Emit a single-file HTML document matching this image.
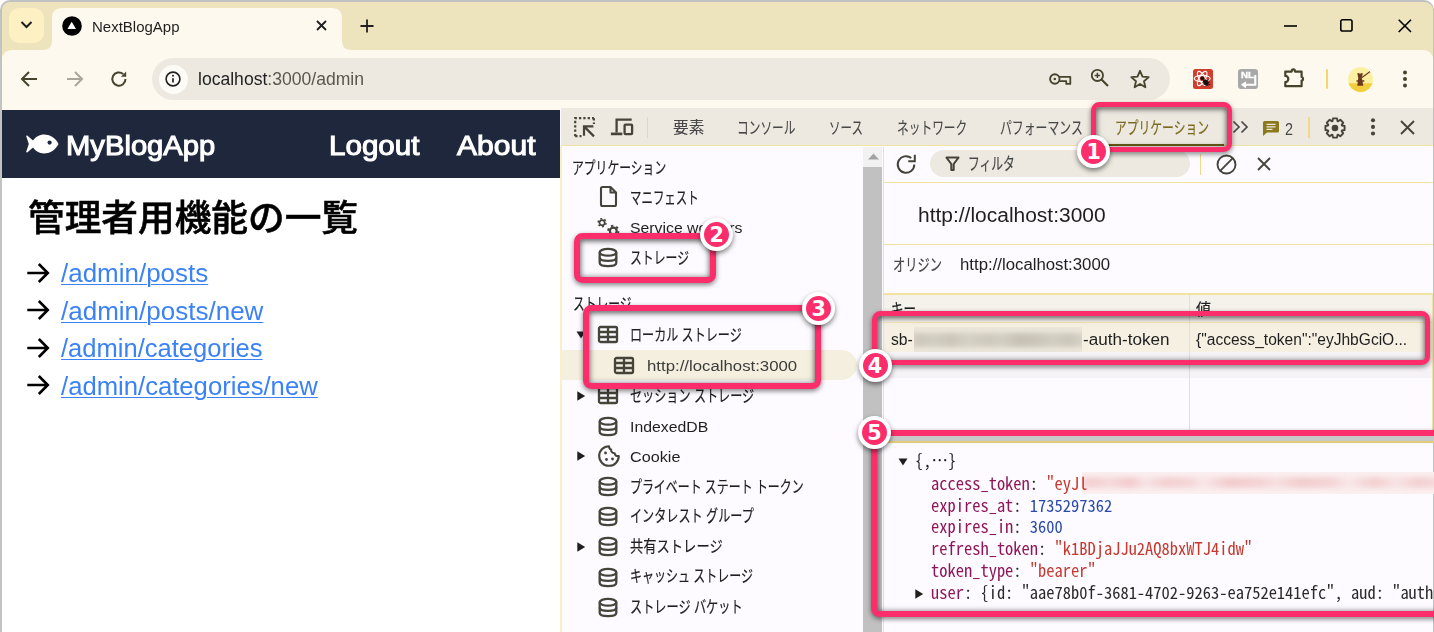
<!DOCTYPE html>
<html lang="ja"><head><meta charset="utf-8"><title>NextBlogApp</title>
<style>
html,body{margin:0;padding:0;}
body{width:1434px;height:632px;overflow:hidden;position:relative;background:#fff;font-family:"Liberation Sans", "Noto Sans CJK JP", sans-serif;}
.b{position:absolute;box-sizing:border-box;}
.t{position:absolute;white-space:pre;line-height:1;transform-origin:0 0;margin:0;padding:0;}
.t i{display:inline-block;width:0;height:0;}
svg{position:absolute;overflow:visible;}
.pk{position:absolute;box-sizing:border-box;border:5.8px solid #fc2d6b;border-radius:8.5px;box-shadow:inset 0 0 6px rgba(0,0,0,.3);filter:drop-shadow(0.5px 2.6px 2.7px rgba(0,0,0,.5));}
.bd{position:absolute;box-sizing:border-box;width:33px;height:33px;border-radius:50%;background:#fc2d6b;border:4px solid #fff;box-shadow:0 2.5px 5px rgba(0,0,0,.5);color:#fff;font:bold 20.7px/26px 'DejaVu Sans', "Liberation Sans", "Noto Sans CJK JP", sans-serif;text-align:center;}
</style></head><body>
<div class="b" style="left:0px;top:0px;width:1434px;height:700px;background:#ede3bc;border:2px solid #c2c2c2;border-right-width:1.5px;border-radius:10px 10px 0 0;"></div>
<div class="b" style="left:9px;top:8px;width:35px;height:35px;background:#fdf0c3;border-radius:10px;"></div>
<svg style="left:20px;top:20px;" width="13" height="10" viewBox="0 0 13 10"><path d="M1.5 2 L6.5 7 L11.5 2" fill="none" stroke="#1f1f1f" stroke-width="2"/></svg>
<div class="b" style="left:2px;top:50px;width:1430.5px;height:59.5px;background:#fdf9ee;border-radius:9px 9px 0 0;"></div>
<svg style="left:40px;top:8px;" width="320" height="42" viewBox="0 0 320 42"><path d="M2 42 C10 42 12 38 12 32 L12 10 Q12 0 22 0 L292 0 Q302 0 302 10 L302 32 C302 38 304 42 312 42 Z" fill="#fdf9ee"/></svg>
<svg style="left:62px;top:15.5px;" width="20" height="20" viewBox="0 0 20 20"><circle cx="10" cy="10" r="9.8" fill="#000"/><path d="M9.7 5.800 L14 13.100 L5.400 13.100 Z" fill="#fff"/></svg>
<svg style="left:316px;top:20px;" width="11" height="11" viewBox="0 0 11 11"><path d="M1 1 L10 10 M10 1 L1 10" stroke="#1f1f1f" stroke-width="1.8" fill="none"/></svg>
<svg style="left:359.5px;top:18.5px;" width="14" height="14" viewBox="0 0 14 14"><path d="M7 0.5 V13.5 M0.5 7 H13.5" stroke="#1f1f1f" stroke-width="1.8" fill="none"/></svg>
<svg style="left:1283.5px;top:24.8px;" width="14" height="2" viewBox="0 0 14 2"><path d="M0 1 H13" stroke="#000" stroke-width="1.6"/></svg>
<svg style="left:1340px;top:19px;" width="13" height="13" viewBox="0 0 13 13"><rect x="0.8" y="0.8" width="11.2" height="11.2" rx="1.8" fill="none" stroke="#000" stroke-width="1.6"/></svg>
<svg style="left:1398px;top:19px;" width="14" height="14" viewBox="0 0 14 14"><path d="M0.7 0.7 L13 13 M13 0.7 L0.7 13" stroke="#000" stroke-width="1.6" fill="none"/></svg>
<svg style="left:20px;top:70px;" width="18" height="18" viewBox="0 0 18 18"><path d="M17 9 H2.5 M9 2 L2 9 L9 16" fill="none" stroke="#47432d" stroke-width="2"/></svg>
<svg style="left:66px;top:70px;" width="18" height="18" viewBox="0 0 18 18"><path d="M1 9 H15.5 M9 2 L16 9 L9 16" fill="none" stroke="#aaa69a" stroke-width="2"/></svg>
<svg style="left:110px;top:70px;" width="18" height="18" viewBox="0 0 18 18"><path d="M15.5 9 A6.6 6.6 0 1 1 13.2 4" fill="none" stroke="#47432d" stroke-width="2"/><path d="M16.2 1.5 V6.8 H10.9 Z" fill="#47432d"/></svg>
<div class="b" style="left:152px;top:58px;width:1018px;height:42px;background:#ede9e1;border-radius:21px;"></div>
<div class="b" style="left:158.5px;top:64.5px;width:29px;height:29px;background:#fdfbf6;border-radius:50%;"></div>
<svg style="left:165px;top:71px;" width="16" height="16" viewBox="0 0 16 16"><circle cx="8" cy="8" r="6.9" fill="none" stroke="#1f1f1f" stroke-width="1.6"/><path d="M8 7.2 V11.6" stroke="#1f1f1f" stroke-width="1.7"/><circle cx="8" cy="4.7" r="1" fill="#1f1f1f"/></svg>
<svg style="left:1049px;top:73px;" width="24" height="13" viewBox="0 0 24 13"><circle cx="5.8" cy="6" r="4.700" fill="none" stroke="#47432d" stroke-width="1.900"/><circle cx="5.800" cy="6" r="1.300" fill="#47432d"/><path d="M10.2 3.900 H21.300 V10.900 H17.300 V8.200 H10.200" fill="none" stroke="#47432d" stroke-width="1.800" stroke-linejoin="round"/></svg>
<svg style="left:1090px;top:68px;" width="20" height="20" viewBox="0 0 20 20"><circle cx="7.4" cy="7.4" r="5.6" fill="none" stroke="#47432d" stroke-width="1.8"/><path d="M11.5 11.5 L18 18" stroke="#47432d" stroke-width="2.1"/><path d="M7.4 4.700 V10.1 M4.700 7.4 H10.1" stroke="#47432d" stroke-width="1.500"/></svg>
<svg style="left:1130px;top:69px;" width="20" height="20" viewBox="0 0 20 20"><path d="M10 1.8 L12.5 7.6 L18.7 8.1 L14 12.2 L15.4 18.3 L10 15 L4.6 18.3 L6 12.2 L1.3 8.1 L7.5 7.6 Z" fill="none" stroke="#47432d" stroke-width="1.8" stroke-linejoin="round"/></svg>
<div class="b" style="left:1192.8px;top:68.6px;width:20.4px;height:20.4px;background:#d03f2e;border-radius:2.5px;"></div>
<svg style="left:1192.8px;top:68.6px;" width="20.4" height="20.4" viewBox="0 0 20.4 20.4"><g fill="none" stroke="#fff" stroke-width="1.100"><ellipse cx="9.200" cy="9.500" rx="8" ry="3.100"/><ellipse cx="9.200" cy="9.500" rx="8" ry="3.100" transform="rotate(60 9.200 9.500)"/><ellipse cx="9.200" cy="9.500" rx="8" ry="3.100" transform="rotate(120 9.200 9.500)"/></g><circle cx="9.300" cy="9.300" r="1.900" fill="#1a0f0c"/><ellipse cx="12.800" cy="13.300" rx="2.300" ry="3.300" transform="rotate(-40 12.800 13.300)" fill="#1a0f0c"/><path d="M9.500 13.500 L15.800 10.800 M10.500 15.800 L16.800 12.800 M11.800 17.300 L17.300 15.300" stroke="#1a0f0c" stroke-width="0.900"/></svg>
<div class="b" style="left:1237.9px;top:68.6px;width:20.3px;height:20.4px;background:#a8a8a8;border-radius:3px;"></div>
<svg style="left:1237.9px;top:68.6px;" width="20.3" height="20.4" viewBox="0 0 20.3 20.4"><path d="M17.300 6 V15.800 H6.500" fill="none" stroke="#fff" stroke-width="2.100"/><path d="M2.800 15.800 L8 12.300 V19.300 Z" fill="#fff"/></svg>
<svg style="left:1282px;top:66px;" width="24" height="24" viewBox="0 0 24 24"><path d="M3.300 5.600 H9.700 A1.650 2.300 0 0 1 13 5.600 H19.600 V11 A1.400 1.800 0 0 1 19.600 14.600 V20.200 H3.300 V16.100 A3 3.100 0 0 0 3.300 9.900 Z" fill="none" stroke="#47432d" stroke-width="2.200" stroke-linejoin="round"/></svg>
<div class="b" style="left:1325.8px;top:69px;width:2px;height:19.6px;background:#f4d66a;border-radius:1px;"></div>
<svg style="left:1348px;top:66.8px;border-radius:50%;overflow:hidden;" width="25.2" height="25.2" viewBox="0 0 25.2 25.2"><g><rect width="26" height="26" fill="#fbf0a2"/><rect y="16.300" width="26" height="10" fill="#f2ce3f"/><path d="M9.300 18.800 L10.300 10.500 Q12 6.500 13.800 10.500 L15.300 18.800 Z" fill="#6b3a1e"/><circle cx="12" cy="8.700" r="2.300" fill="#6b3a1e"/><circle cx="10.300" cy="7" r="1" fill="#6b3a1e"/><circle cx="13.800" cy="7" r="1" fill="#6b3a1e"/><path d="M14 10.500 L22.500 4.300" stroke="#6b3a1e" stroke-width="1.100" fill="none"/><path d="M8.500 14 L16.300 14" stroke="#6b3a1e" stroke-width="1.300"/></g></svg>
<svg style="left:1402px;top:70px;" width="6" height="20" viewBox="0 0 6 20"><circle cx="3" cy="2.400" r="2" fill="#47432d"/><circle cx="3" cy="8.900" r="2" fill="#47432d"/><circle cx="3" cy="15.400" r="2" fill="#47432d"/></svg>
<div class="b" style="left:2px;top:109.5px;width:558.4px;height:530px;background:#fff;"></div>
<div class="b" style="left:2px;top:109.5px;width:559.2px;height:68.2px;background:#1e273b;"></div>
<svg style="left:26px;top:134px;" width="33" height="20" viewBox="0 0 33 20"><path d="M32.6 10 C29 3.2 23.5 0.6 18 0.6 C13.5 0.6 9.5 3 7 6.5 L1.2 1.6 C0.6 1.2 0 1.7 0.3 2.4 L2.8 10 L0.3 17.6 C0 18.3 0.6 18.8 1.2 18.4 L7 13.5 C9.5 17 13.500 19.4 18 19.4 C23.5 19.4 29 16.800 32.6 10 Z" fill="#fff"/><circle cx="23.6" cy="8.6" r="2.1" fill="#1e273b"/></svg>
<svg style="left:26.5px;top:262.7px;" width="23" height="20" viewBox="0 0 23 20"><path d="M0.3 10 H20.8 M11.8 1 L20.8 10 L11.8 19" fill="none" stroke="#000" stroke-width="2.6"/></svg>
<svg style="left:26.5px;top:300.2px;" width="23" height="20" viewBox="0 0 23 20"><path d="M0.3 10 H20.8 M11.8 1 L20.8 10 L11.8 19" fill="none" stroke="#000" stroke-width="2.6"/></svg>
<svg style="left:26.5px;top:337.7px;" width="23" height="20" viewBox="0 0 23 20"><path d="M0.3 10 H20.8 M11.8 1 L20.8 10 L11.8 19" fill="none" stroke="#000" stroke-width="2.6"/></svg>
<svg style="left:26.5px;top:375.2px;" width="23" height="20" viewBox="0 0 23 20"><path d="M0.3 10 H20.8 M11.8 1 L20.8 10 L11.8 19" fill="none" stroke="#000" stroke-width="2.6"/></svg>
<div class="b" style="left:560.3px;top:108.4px;width:873px;height:530px;background:#fdfbff;"></div>
<div class="b" style="left:560.3px;top:146px;width:1.7px;height:530px;background:#fbefc8;"></div>
<div class="b" style="left:561.2px;top:108.4px;width:872px;height:36.6px;background:#ede9e1;"></div>
<div class="b" style="left:561.2px;top:144.8px;width:872px;height:1.4px;background:#f3e3a3;"></div>
<svg style="left:572.6px;top:116.2px;" width="23" height="22" viewBox="0 0 23 22"><path d="M2.200 20.200 V2.200 H20.900" fill="none" stroke="#46443a" stroke-width="2.200" stroke-dasharray="2.300 2.050"/><path d="M20.900 2.200 V8" fill="none" stroke="#46443a" stroke-width="2.200" stroke-dasharray="2.300 2.050"/><path d="M2.200 20.200 H8.500" fill="none" stroke="#46443a" stroke-width="2.200" stroke-dasharray="2.300 2.050"/><path d="M21 20.400 L11 10.400 M11 19.800 V10.400 H20.400" fill="none" stroke="#46443a" stroke-width="2.200"/></svg>
<svg style="left:610px;top:117px;" width="25" height="20" viewBox="0 0 25 20"><path d="M6.600 15.500 V2.600 H21.700" fill="none" stroke="#46443a" stroke-width="2.300"/><path d="M0.900 16.900 H12.300" stroke="#46443a" stroke-width="2.700"/><rect x="14.600" y="7.600" width="7.500" height="9.500" rx="0.800" fill="none" stroke="#46443a" stroke-width="2.300"/></svg>
<div class="b" style="left:646.5px;top:117px;width:1.4px;height:21px;background:#f0d98a;"></div>
<div class="b" style="left:1100px;top:144.2px;width:124px;height:1.8px;background:#6b5e14;"></div>
<svg style="left:1232px;top:120px;" width="18" height="14" viewBox="0 0 18 14"><path d="M1.500 1.500 L7 7 L1.500 12.5 M9.5 1.500 L15 7 L9.5 12.5" fill="none" stroke="#474747" stroke-width="1.7"/></svg>
<svg style="left:1262.5px;top:121px;" width="17" height="15" viewBox="0 0 17 15"><path d="M1.500 0 H14.5 Q16 0 16 1.500 V10 Q16 11.5 14.5 11.5 H4 L0 15 V1.500 Q0 0 1.500 0 Z" fill="#8a7a1c"/><path d="M3.500 3.300 H12.5 M3.500 5.800 H12.5 M3.500 8.300 H9.5" stroke="#ede9e1" stroke-width="1.300"/></svg>
<div class="b" style="left:1308.2px;top:117px;width:1.4px;height:21px;background:#f0d98a;"></div>
<svg style="left:1324px;top:116.5px;" width="22" height="22" viewBox="0 0 22 22"><path d="M17.96 8.49 L20.59 8.98 L20.59 13.02 L17.96 13.51 L17.70 14.15 L19.21 16.35 L16.35 19.21 L14.15 17.70 L13.51 17.96 L13.02 20.59 L8.98 20.59 L8.49 17.96 L7.85 17.70 L5.65 19.21 L2.79 16.35 L4.30 14.15 L4.04 13.51 L1.41 13.02 L1.41 8.98 L4.04 8.49 L4.30 7.85 L2.79 5.65 L5.65 2.79 L7.85 4.30 L8.49 4.04 L8.98 1.41 L13.02 1.41 L13.51 4.04 L14.15 4.30 L16.35 2.79 L19.21 5.65 L17.70 7.85 Z" fill="none" stroke="#46443a" stroke-width="1.9" stroke-linejoin="round"/><circle cx="11" cy="11" r="3.300" fill="#46443a"/></svg>
<svg style="left:1370px;top:118px;" width="6" height="18" viewBox="0 0 6 18"><circle cx="3" cy="2.300" r="2.050" fill="#46443a"/><circle cx="3" cy="8.900" r="2.050" fill="#46443a"/><circle cx="3" cy="15.500" r="2.050" fill="#46443a"/></svg>
<svg style="left:1400px;top:120px;" width="15" height="15" viewBox="0 0 15 15"><path d="M1 1 L14 14 M14 1 L1 14" fill="none" stroke="#46443a" stroke-width="1.900"/></svg>
<div class="b" style="left:863.4px;top:146.7px;width:18.5px;height:490px;background:#c1c1c1;"></div>
<div class="b" style="left:863.4px;top:146.7px;width:18.5px;height:20.5px;background:#f1f1f1;"></div>
<svg style="left:867.5px;top:153px;" width="11" height="7" viewBox="0 0 11 7"><path d="M0 6.500 L5.500 0.500 L11 6.500 Z" fill="#a3a3a3"/></svg>
<div class="b" style="left:883px;top:146.7px;width:1.3px;height:490px;background:#f3e3a3;"></div>
<div class="b" style="left:561px;top:350.3px;width:296px;height:29.8px;background:#f5efdf;border-radius:0 15px 15px 0;"></div>
<svg style="left:599.5px;top:186.3px;" width="17" height="21" viewBox="0 0 17 21"><path d="M1 2.500 Q1 1 2.500 1 H10.5 L16 6.500 V18.5 Q16 20 14.5 20 H2.500 Q1 20 1 18.5 Z M10.5 1 V6.500 H16" fill="none" stroke="#46443a" stroke-width="2.100" stroke-linejoin="round"/></svg>
<svg style="left:597px;top:216.5px;" width="24" height="22" viewBox="0 0 24 22"><circle cx="5.10" cy="5.70" r="2.63" fill="none" stroke="#46443a" stroke-width="1.69"/><path d="M8.24 6.67 L9.59 7.09 M5.83 8.91 L6.14 10.28 M2.69 7.94 L1.65 8.89 M1.96 4.73 L0.61 4.31 M4.37 2.49 L4.06 1.12 M7.51 3.46 L8.55 2.51" stroke="#46443a" stroke-width="1.97" fill="none"/><circle cx="16.30" cy="14.00" r="3.42" fill="none" stroke="#46443a" stroke-width="2.20"/><path d="M20.38 15.26 L22.13 15.80 M17.25 18.16 L17.65 19.95 M13.17 16.90 L11.83 18.15 M12.22 12.74 L10.47 12.20 M15.35 9.84 L14.95 8.05 M19.43 11.10 L20.77 9.85" stroke="#46443a" stroke-width="2.56" fill="none"/></svg>
<svg style="left:598.3px;top:248px;" width="20" height="19" viewBox="0 0 20 19"><g fill="none" stroke="#46443a" stroke-width="2.300"><ellipse cx="10" cy="4.300" rx="8.300" ry="3.400"/><path d="M1.700 4.300 V14.700 C1.700 19.200 18.300 19.200 18.300 14.700 V4.300"/><path d="M1.700 9.500 C1.700 14 18.300 14 18.300 9.500"/></g></svg>
<svg style="left:576px;top:331px;" width="10" height="8" viewBox="0 0 10 8"><path d="M0.500 0.500 L9.500 0.500 L5 7.500 Z" fill="#1f1f1f"/></svg>
<svg style="left:598.3px;top:326px;" width="20" height="17" viewBox="0 0 20 17"><g fill="none" stroke="#46443a" stroke-width="2.300"><rect x="1" y="1" width="18" height="15" rx="1.500"/><path d="M1 6 H19 M1 11 H19 M10 1 V16"/></g></svg>
<svg style="left:614.4px;top:356.7px;" width="20" height="17" viewBox="0 0 20 17"><g fill="none" stroke="#46443a" stroke-width="2.300"><rect x="1" y="1" width="18" height="15" rx="1.500"/><path d="M1 6 H19 M1 11 H19 M10 1 V16"/></g></svg>
<svg style="left:577.2px;top:391px;" width="9" height="10" viewBox="0 0 9 10"><path d="M0.300 0.200 L8.200 5 L0.300 9.800 Z" fill="#1f1f1f"/></svg>
<svg style="left:598.3px;top:387px;" width="20" height="17" viewBox="0 0 20 17"><g fill="none" stroke="#46443a" stroke-width="2.300"><rect x="1" y="1" width="18" height="15" rx="1.500"/><path d="M1 6 H19 M1 11 H19 M10 1 V16"/></g></svg>
<svg style="left:598.3px;top:416.5px;" width="20" height="19" viewBox="0 0 20 19"><g fill="none" stroke="#46443a" stroke-width="2.300"><ellipse cx="10" cy="4.300" rx="8.300" ry="3.400"/><path d="M1.700 4.300 V14.700 C1.700 19.200 18.300 19.200 18.300 14.700 V4.300"/><path d="M1.700 9.500 C1.700 14 18.300 14 18.300 9.500"/></g></svg>
<svg style="left:577.2px;top:451px;" width="9" height="10" viewBox="0 0 9 10"><path d="M0.300 0.200 L8.200 5 L0.300 9.800 Z" fill="#1f1f1f"/></svg>
<svg style="left:597.5px;top:445px;" width="22" height="22" viewBox="0 0 22 22"><path d="M11 1.200 A9.800 9.800 0 1 0 20.800 11 C18.500 11.5 16.800 10.200 16.600 8.200 C14.200 8.300 12.800 6.500 13.200 4.600 C11.800 4 11 2.800 11 1.200 Z" fill="none" stroke="#46443a" stroke-width="2.100" stroke-linejoin="round"/><circle cx="7.500" cy="8" r="1.400" fill="#46443a"/><circle cx="8.500" cy="14.500" r="1.400" fill="#46443a"/><circle cx="14.500" cy="14" r="1.400" fill="#46443a"/></svg>
<svg style="left:598.3px;top:477px;" width="20" height="19" viewBox="0 0 20 19"><g fill="none" stroke="#46443a" stroke-width="2.300"><ellipse cx="10" cy="4.300" rx="8.300" ry="3.400"/><path d="M1.700 4.300 V14.700 C1.700 19.200 18.300 19.200 18.300 14.700 V4.300"/><path d="M1.700 9.500 C1.700 14 18.300 14 18.300 9.500"/></g></svg>
<svg style="left:598.3px;top:507px;" width="20" height="19" viewBox="0 0 20 19"><g fill="none" stroke="#46443a" stroke-width="2.300"><ellipse cx="10" cy="4.300" rx="8.300" ry="3.400"/><path d="M1.700 4.300 V14.700 C1.700 19.200 18.300 19.200 18.300 14.700 V4.300"/><path d="M1.700 9.500 C1.700 14 18.300 14 18.300 9.500"/></g></svg>
<svg style="left:577.2px;top:542px;" width="9" height="10" viewBox="0 0 9 10"><path d="M0.300 0.200 L8.200 5 L0.300 9.800 Z" fill="#1f1f1f"/></svg>
<svg style="left:598.3px;top:537.3px;" width="20" height="19" viewBox="0 0 20 19"><g fill="none" stroke="#46443a" stroke-width="2.300"><ellipse cx="10" cy="4.300" rx="8.300" ry="3.400"/><path d="M1.700 4.300 V14.700 C1.700 19.200 18.300 19.200 18.300 14.700 V4.300"/><path d="M1.700 9.500 C1.700 14 18.300 14 18.300 9.500"/></g></svg>
<svg style="left:598.3px;top:567.5px;" width="20" height="19" viewBox="0 0 20 19"><g fill="none" stroke="#46443a" stroke-width="2.300"><ellipse cx="10" cy="4.300" rx="8.300" ry="3.400"/><path d="M1.700 4.300 V14.700 C1.700 19.200 18.300 19.200 18.300 14.700 V4.300"/><path d="M1.700 9.500 C1.700 14 18.300 14 18.300 9.500"/></g></svg>
<svg style="left:598.3px;top:597.7px;" width="20" height="19" viewBox="0 0 20 19"><g fill="none" stroke="#46443a" stroke-width="2.300"><ellipse cx="10" cy="4.300" rx="8.300" ry="3.400"/><path d="M1.700 4.300 V14.700 C1.700 19.200 18.300 19.200 18.300 14.700 V4.300"/><path d="M1.700 9.500 C1.700 14 18.300 14 18.300 9.500"/></g></svg>
<svg style="left:896px;top:153.5px;" width="22" height="21" viewBox="0 0 22 21"><path d="M18.300 10.5 A8.300 8.300 0 1 1 15.300 4.100" fill="none" stroke="#46443a" stroke-width="2"/><path d="M18.800 0.800 V7.300 H12.300" fill="none" stroke="#46443a" stroke-width="2"/></svg>
<div class="b" style="left:930px;top:150.3px;width:260px;height:27px;background:#ede9e1;border-radius:13.5px;"></div>
<svg style="left:945px;top:156px;" width="15" height="16" viewBox="0 0 15 16"><path d="M1.500 1.600 H13.500 L8.700 8 V14 H6.300 V8 Z" fill="none" stroke="#46443a" stroke-width="2" stroke-linejoin="round"/></svg>
<div class="b" style="left:1199.7px;top:154px;width:1.4px;height:21px;background:#f0d98a;"></div>
<svg style="left:1215.5px;top:153.5px;" width="21" height="21" viewBox="0 0 21 21"><circle cx="10.5" cy="10.5" r="9" fill="none" stroke="#46443a" stroke-width="1.900"/><path d="M4.200 16.800 L16.800 4.200" stroke="#46443a" stroke-width="1.900"/></svg>
<svg style="left:1256.5px;top:157px;" width="14" height="14" viewBox="0 0 14 14"><path d="M1 1 L13 13 M13 1 L1 13" fill="none" stroke="#46443a" stroke-width="1.900"/></svg>
<div class="b" style="left:884px;top:181.5px;width:549px;height:1.3px;background:#f3e3a3;"></div>
<div class="b" style="left:884px;top:243.8px;width:549px;height:1.3px;background:#f3e3a3;"></div>
<div class="b" style="left:884px;top:293.5px;width:549px;height:30px;background:#f5f2ec;"></div>
<div class="b" style="left:884px;top:293.3px;width:549px;height:1.3px;background:#f3e3a3;"></div>
<div class="b" style="left:884px;top:322.8px;width:549px;height:29px;background:#f5f0e2;"></div>
<div class="b" style="left:884px;top:322.3px;width:549px;height:1.2px;background:#f3e6b8;"></div>
<div class="b" style="left:884px;top:351.6px;width:549px;height:26.8px;background:#f5f3f6;"></div>
<div class="b" style="left:1189.2px;top:293.5px;width:1.2px;height:148px;background:#f0e2a4;"></div>
<div class="b" style="left:1432px;top:293.5px;width:1px;height:148px;background:#f0e2a4;"></div>
<div class="b" style="left:914px;top:327px;width:168px;height:24.6px;background:#ebe6da;overflow:hidden"><div class="b" style="left:-6px;top:5.5px;width:180px;height:14px;filter:blur(2.6px);background:linear-gradient(90deg,#ded9cd 0,#cdc8bb 6%,#d3cec2 14%,#cbc6b9 24%,#d6d1c5 33%,#cec9bd 45%,#d4cfc3 52%,#c6c1b4 62%,#cbc6ba 72%,#d3cec2 80%,#ccc7bb 90%,#ddd8cc 100%)"></div></div>
<div class="b" style="left:884px;top:441px;width:549px;height:1.5px;background:#e0cd7c;"></div>
<svg style="left:898px;top:458px;" width="10" height="8" viewBox="0 0 10 8"><path d="M0.500 0.500 L9.500 0.500 L5 7.500 Z" fill="#1f1f1f"/></svg>
<svg style="left:914.7px;top:588.5px;" width="9" height="10" viewBox="0 0 9 10"><path d="M0.300 0.200 L8.200 5 L0.300 9.800 Z" fill="#1f1f1f"/></svg>
<div class="b" style="left:1082.2px;top:472px;width:352px;height:21.6px;background:#fbeff0;overflow:hidden"><div class="b" style="left:-6px;top:4.5px;width:364px;height:11.5px;filter:blur(2.4px);background:linear-gradient(90deg,#f8e2e3 0,#f3cfd0 4%,#f6dadb 9%,#f2cbcc 15%,#f8e4e5 19%,#f3d0d1 25%,#f5d6d7 31%,#f9e6e7 35%,#f2cccd 42%,#f4d3d4 50%,#f7dfe0 55%,#f2cdce 62%,#f4d4d5 70%,#f9e7e8 75%,#f3cfd0 82%,#f8e3e4 88%,#f3d0d1 94%,#f6dadb 100%)"></div></div>
<div class="t" id="t0" style="left:92.00px;top:19.80px;font-size:14.5px;color:#1f1f1f;transform:scaleX(1.0338);">NextBlogApp</div>
<div class="t" id="t1" style="left:198.00px;top:71.20px;font-size:17.5px;color:#1f1f1f;transform:scaleX(1.0036);">localhost<span style="color:#5a564c">:3000/admin</span></div>
<div class="t" id="t2" style="left:1241.20px;top:70.20px;font-size:9.8px;color:#fff;font-weight:700;transform:scaleX(0.9952);-webkit-text-stroke:0.4px #fff;">NL</div>
<div class="t" id="t3" style="left:66.00px;top:133.00px;font-size:27px;color:#fff;transform:scaleX(1.0813);-webkit-text-stroke:1.05px #fff;">MyBlogApp</div>
<div class="t" id="t4" style="left:328.50px;top:133.00px;font-size:27px;color:#fff;transform:scaleX(1.0957);-webkit-text-stroke:1.05px #fff;">Logout</div>
<div class="t" id="t5" style="left:456.50px;top:133.00px;font-size:27px;color:#fff;transform:scaleX(1.1125);-webkit-text-stroke:1.05px #fff;">About</div>
<div class="t" id="t6" style="left:27.50px;top:200.60px;font-size:36.5px;color:#000;font-weight:500;transform:scaleX(1.0046);-webkit-text-stroke:0.55px #000;">管理者用機能の一覧</div>
<div class="t" id="t7" style="left:61.30px;top:261.20px;font-size:25px;color:#3b82f6;transform:scaleX(1.0384);text-decoration:underline;text-decoration-thickness:1.4px;text-underline-offset:1.6px;">/admin/posts</div>
<div class="t" id="t8" style="left:61.30px;top:298.70px;font-size:25px;color:#3b82f6;transform:scaleX(1.0404);text-decoration:underline;text-decoration-thickness:1.4px;text-underline-offset:1.6px;">/admin/posts/new</div>
<div class="t" id="t9" style="left:61.30px;top:336.20px;font-size:25px;color:#3b82f6;transform:scaleX(1.0216);text-decoration:underline;text-decoration-thickness:1.4px;text-underline-offset:1.6px;">/admin/categories</div>
<div class="t" id="t10" style="left:61.30px;top:373.70px;font-size:25px;color:#3b82f6;transform:scaleX(1.0262);text-decoration:underline;text-decoration-thickness:1.4px;text-underline-offset:1.6px;">/admin/categories/new</div>
<div class="t" id="t11" style="left:672.70px;top:120.10px;font-size:15.5px;color:#474747;transform:scaleX(1.0092);-webkit-text-stroke:0.1px;">要素</div>
<div class="t" id="t12" style="left:737.30px;top:120.56px;font-size:16.8px;color:#474747;transform:scaleX(0.6971);-webkit-text-stroke:0.1px;">コンソール</div>
<div class="t" id="t13" style="left:829.00px;top:120.56px;font-size:16.8px;color:#474747;transform:scaleX(0.6846);-webkit-text-stroke:0.1px;">ソース</div>
<div class="t" id="t14" style="left:896.70px;top:120.56px;font-size:16.8px;color:#474747;transform:scaleX(0.6981);-webkit-text-stroke:0.1px;">ネットワーク</div>
<div class="t" id="t15" style="left:999.70px;top:120.56px;font-size:16.8px;color:#474747;transform:scaleX(0.7068);-webkit-text-stroke:0.1px;">パフォーマンス</div>
<div class="t" id="t16" style="left:1115.00px;top:120.56px;font-size:16.8px;color:#7a6a1d;transform:scaleX(0.7019);-webkit-text-stroke:0.2px;">アプリケーション</div>
<div class="t" id="t17" style="left:1284.60px;top:122.30px;font-size:16px;color:#474747;transform:scaleX(0.8982);">2</div>
<div class="t" id="t18" style="left:572.30px;top:160.76px;font-size:16.8px;color:#1f1f1f;transform:scaleX(0.7034);-webkit-text-stroke:0.2px;">アプリケーション</div>
<div class="t" id="t19" style="left:629.90px;top:190.96px;font-size:16.8px;color:#1f1f1f;transform:scaleX(0.6822);-webkit-text-stroke:0.2px;">マニフェスト</div>
<div class="t" id="t20" style="left:629.90px;top:220.40px;font-size:15px;color:#1f1f1f;transform:scaleX(1.0534);">Service workers</div>
<div class="t" id="t21" style="left:629.80px;top:251.26px;font-size:16.8px;color:#1f1f1f;transform:scaleX(0.7059);-webkit-text-stroke:0.2px;">ストレージ</div>
<div class="t" id="t22" style="left:573.00px;top:297.46px;font-size:16.8px;color:#1f1f1f;transform:scaleX(0.6999);-webkit-text-stroke:0.2px;">ストレージ</div>
<div class="t" id="t23" style="left:629.80px;top:327.96px;font-size:16.8px;color:#1f1f1f;transform:scaleX(0.7190);-webkit-text-stroke:0.2px;">ローカル ストレージ</div>
<div class="t" id="t24" style="left:647.20px;top:357.88px;font-size:15.5px;color:#3c3c3c;transform:scaleX(1.0825);">http://localhost:3000</div>
<div class="t" id="t25" style="left:629.80px;top:388.86px;font-size:16.8px;color:#1f1f1f;transform:scaleX(0.7215);-webkit-text-stroke:0.2px;">セッション ストレージ</div>
<div class="t" id="t26" style="left:629.80px;top:418.58px;font-size:15.5px;color:#1f1f1f;transform:scaleX(1.0195);">IndexedDB</div>
<div class="t" id="t27" style="left:629.80px;top:448.78px;font-size:15.5px;color:#1f1f1f;transform:scaleX(1.0446);">Cookie</div>
<div class="t" id="t28" style="left:629.80px;top:479.66px;font-size:16.8px;color:#1f1f1f;transform:scaleX(0.7107);-webkit-text-stroke:0.2px;">プライベート ステート トークン</div>
<div class="t" id="t29" style="left:629.80px;top:509.36px;font-size:16.8px;color:#1f1f1f;transform:scaleX(0.7220);-webkit-text-stroke:0.2px;">インタレスト グループ</div>
<div class="t" id="t30" style="left:629.80px;top:539.28px;font-size:16px;color:#1f1f1f;transform:scaleX(0.8300);-webkit-text-stroke:0.2px;">共有ストレージ</div>
<div class="t" id="t31" style="left:629.80px;top:569.46px;font-size:16.8px;color:#1f1f1f;transform:scaleX(0.7145);-webkit-text-stroke:0.2px;">キャッシュ ストレージ</div>
<div class="t" id="t32" style="left:629.80px;top:599.96px;font-size:16.8px;color:#1f1f1f;transform:scaleX(0.7248);-webkit-text-stroke:0.2px;">ストレージ バケット</div>
<div class="t" id="t33" style="left:967.80px;top:156.96px;font-size:16.8px;color:#474747;transform:scaleX(0.7021);-webkit-text-stroke:0.2px;">フィルタ</div>
<div class="t" id="t34" style="left:918.00px;top:204.80px;font-size:20px;color:#1f1f1f;transform:scaleX(1.0480);">http://localhost:3000</div>
<div class="t" id="t35" style="left:892.60px;top:257.56px;font-size:16.8px;color:#474747;transform:scaleX(0.7298);-webkit-text-stroke:0.2px;">オリジン</div>
<div class="t" id="t36" style="left:959.70px;top:257.40px;font-size:16px;color:#1f1f1f;transform:scaleX(1.0480);">http://localhost:3000</div>
<div class="t" id="t37" style="left:891.00px;top:302.16px;font-size:16.8px;color:#1f1f1f;transform:scaleX(0.7445);-webkit-text-stroke:0.2px;">キー</div>
<div class="t" id="t38" style="left:1196.00px;top:301.70px;font-size:15.5px;color:#1f1f1f;transform:scaleX(0.9668);-webkit-text-stroke:0.2px;">値</div>
<div class="t" id="t39" style="left:891.40px;top:331.80px;font-size:16px;color:#1f1f1f;transform:scaleX(0.9805);">sb-</div>
<div class="t" id="t40" style="left:1082.50px;top:331.80px;font-size:16px;color:#1f1f1f;transform:scaleX(1.0687);">-auth-token</div>
<div class="t" id="t41" style="left:1196.30px;top:331.80px;font-size:16px;color:#1f1f1f;transform:scaleX(0.9726);">{&quot;access_token&quot;:&quot;eyJhbGciO...</div>
<div class="t" id="t42" style="left:914.80px;top:450.60px;font-size:17px;color:#1f1f1f;font-family:'Noto Sans Mono CJK JP', 'IPAGothic', 'Liberation Mono', monospace;transform:scaleX(0.9688);">{,…}</div>
<div class="t" id="t43" style="left:931.30px;top:473.70px;font-size:17px;color:#2a2a2a;font-family:'Noto Sans Mono CJK JP', 'IPAGothic', 'Liberation Mono', monospace;transform:scaleX(0.9688);"><span style="color:#8e1558">access_token</span>: <span style="color:#c5392e">"eyJl</span></div>
<div class="t" id="t44" style="left:931.30px;top:495.55px;font-size:17px;color:#2a2a2a;font-family:'Noto Sans Mono CJK JP', 'IPAGothic', 'Liberation Mono', monospace;transform:scaleX(0.9688);"><span style="color:#8e1558">expires_at</span>: <span style="color:#2b4baa">1735297362</span></div>
<div class="t" id="t45" style="left:931.30px;top:517.40px;font-size:17px;color:#2a2a2a;font-family:'Noto Sans Mono CJK JP', 'IPAGothic', 'Liberation Mono', monospace;transform:scaleX(0.9688);"><span style="color:#8e1558">expires_in</span>: <span style="color:#2b4baa">3600</span></div>
<div class="t" id="t46" style="left:931.30px;top:539.25px;font-size:17px;color:#2a2a2a;font-family:'Noto Sans Mono CJK JP', 'IPAGothic', 'Liberation Mono', monospace;transform:scaleX(0.9688);"><span style="color:#8e1558">refresh_token</span>: <span style="color:#c5392e">"k1BDjaJJu2AQ8bxWTJ4idw"</span></div>
<div class="t" id="t47" style="left:931.30px;top:561.10px;font-size:17px;color:#2a2a2a;font-family:'Noto Sans Mono CJK JP', 'IPAGothic', 'Liberation Mono', monospace;transform:scaleX(0.9688);"><span style="color:#8e1558">token_type</span>: <span style="color:#c5392e">"bearer"</span></div>
<div class="t" id="t48" style="left:931.30px;top:582.95px;font-size:17px;color:#2a2a2a;font-family:'Noto Sans Mono CJK JP', 'IPAGothic', 'Liberation Mono', monospace;transform:scaleX(0.9688);"><span style="color:#8e1558">user</span>: {id: "aae78b0f-3681-4702-9263-ea752e141efc", aud: "authenticated", …}</div>
<div class="pk" style="left:1091px;top:101.5px;width:140.5px;height:50.69999999999999px;border-width:5.8px"></div>
<div class="pk" style="left:574.2px;top:232.6px;width:141.5px;height:50.29999999999998px;border-width:6.1px"></div>
<div class="pk" style="left:583.1px;top:305.4px;width:238.29999999999995px;height:84.0px;border-width:6.1px"></div>
<div class="pk" style="left:871.9px;top:310.6px;width:558.4px;height:54.599999999999966px;border-width:5.9px"></div>
<div class="pk" style="left:871.2px;top:430px;width:578.8px;height:187px;border-width:6.3px"></div>
<div class="b" style="left:877.5px;top:436.3px;width:560px;height:4.9px;background:#c8c8c8"></div>
<div class="b" style="left:877.5px;top:441.1px;width:560px;height:1.5px;background:#e0cd7c"></div>
<div class="bd" style="left:1077.3px;top:134.7px">1</div>
<div class="bd" style="left:700.1px;top:218.3px">2</div>
<div class="bd" style="left:802.2px;top:292.3px">3</div>
<div class="bd" style="left:858.5px;top:349.3px">4</div>
<div class="bd" style="left:857.9px;top:415.5px">5</div>
</body></html>
